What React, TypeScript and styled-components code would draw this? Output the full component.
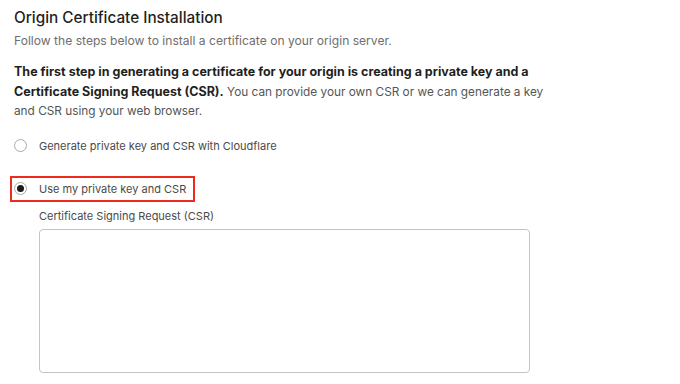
import React from "react";
import styled, { createGlobalStyle } from "styled-components";

const Global = createGlobalStyle`
  html, body { margin: 0; padding: 0; background: #ffffff; }
  body { font-family: Inter, "Noto Sans", "Liberation Sans", sans-serif; -webkit-font-smoothing: antialiased; }
`;

const Page = styled.div`
  padding: 8px 14px 0 14px;
  width: 680px;
  box-sizing: border-box;
`;

const Title = styled.h1`
  margin: 0;
  font-size: 15.3px;
  font-weight: 500;
  color: #1f1f1f;
  line-height: 20px;
`;

const Subtitle = styled.p`
  margin: 4px 0 0 0;
  font-size: 12.1px;
  color: #6e6e6e;
  line-height: 18px;
`;

const Intro = styled.p`
  margin: 13px 0 0 0;
  max-width: 550px;
  font-size: 11.8px;
  line-height: 19.5px;
  color: #555555;
  strong { color: #1f1f1f; font-weight: 700; font-size: 12.5px; line-height: 1; }
`;

const Options = styled.div`
  display: flex;
  flex-direction: column;
  align-items: flex-start;
  margin-top: 11px;
  gap: 17px;
`;

const OptionRow = styled.label<{ $highlight?: boolean }>`
  display: flex;
  align-items: center;
  gap: 12px;
  height: 26px;
  margin-left: -4px;
  padding: 0 7px 0 2px;
  box-sizing: border-box;
  border: 2px solid ${(p) => (p.$highlight ? "#ec2b1c" : "transparent")};
  font-size: 11px;
  color: #4a4a4a;
`;

const Radio = styled.span<{ $checked?: boolean }>`
  width: 13px;
  height: 13px;
  border-radius: 50%;
  border: 1px solid #a9a9a9;
  box-sizing: border-box;
  display: flex;
  align-items: center;
  justify-content: center;
  background: #fff;
  &::after {
    content: "";
    width: 7px;
    height: 7px;
    border-radius: 50%;
    background: ${(p) => (p.$checked ? "#1a1a1a" : "transparent")};
  }
`;

const Field = styled.div`
  display: flex;
  flex-direction: column;
  margin: 6px 0 0 25px;
  gap: 5px;
`;

const FieldLabel = styled.span`
  font-size: 11px;
  color: #4a4a4a;
  line-height: 16px;
`;

const TextArea = styled.textarea`
  width: 491px;
  height: 144px;
  box-sizing: border-box;
  border: 1px solid #c4c4c4;
  border-radius: 4px;
  resize: none;
  outline: none;
  font-family: inherit;
`;

export default function App() {
  return (
    <>
      <Global />
      <Page>
        <Title>Origin Certificate Installation</Title>
        <Subtitle>Follow the steps below to install a certificate on your origin server.</Subtitle>
        <Intro>
          <strong>
            The first step in generating a certificate for your origin is creating a private key and a
            Certificate Signing Request (CSR).
          </strong>{" "}
          You can provide your own CSR or we can generate a key and CSR using your web browser.
        </Intro>
        <Options>
          <OptionRow>
            <Radio />
            Generate private key and CSR with Cloudflare
          </OptionRow>
          <OptionRow $highlight>
            <Radio $checked />
            Use my private key and CSR
          </OptionRow>
        </Options>
        <Field>
          <FieldLabel>Certificate Signing Request (CSR)</FieldLabel>
          <TextArea />
        </Field>
      </Page>
    </>
  );
}
